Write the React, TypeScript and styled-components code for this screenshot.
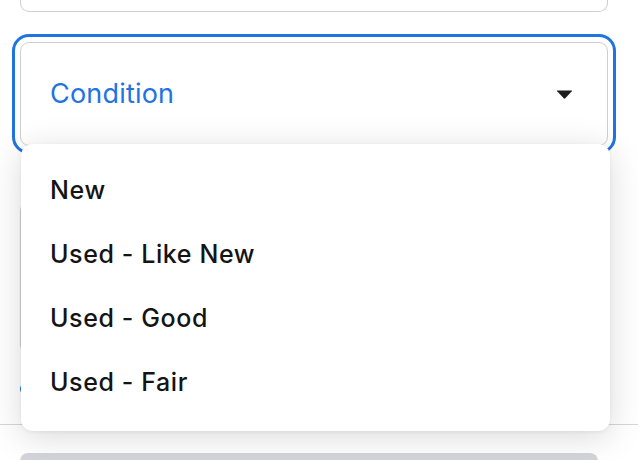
import React from "react";
import styled, { createGlobalStyle } from "styled-components";

const GlobalStyle = createGlobalStyle`
  html, body {
    margin: 0;
    padding: 0;
    background: #ffffff;
  }
  body {
    font-family: Inter, "Noto Sans", "Liberation Sans", sans-serif;
    -webkit-font-smoothing: antialiased;
  }
`;

const Page = styled.div`
  position: relative;
  width: 638px;
  height: 460px;
  overflow: hidden;
  background: #ffffff;
`;

const Form = styled.div`
  display: flex;
  flex-direction: column;
  padding: 0 30px 0 20px;
`;

const CutField = styled.div`
  height: 11px;
  border: 1px solid #cfcfcf;
  border-top: none;
  border-radius: 0 0 9px 9px;
  background: #fff;
`;

const SelectBox = styled.div`
  margin-top: 30px;
  height: 104px;
  box-sizing: border-box;
  display: flex;
  align-items: center;
  justify-content: space-between;
  padding: 0 34px 0 29px;
  border: 1px solid #cfcfcf;
  border-radius: 9px;
  background: #fff;
  outline: 3px solid #1f74e0;
  outline-offset: 5px;
`;

const SelectLabel = styled.span`
  font-size: 27px;
  color: #1f74e0;
  letter-spacing: 0.2px;
  margin-top: -2px;
`;

const TextArea = styled.div`
  margin-top: 56px;
  height: 150px;
  border: 1px solid #cfcfcf;
  border-radius: 9px;
  background: #fff;
`;

const HelperRow = styled.div`
  margin-top: 30px;
  display: flex;
  align-items: center;
  gap: 8px;
  font-size: 16px;
  color: #1f74e0;
`;

const Dot = styled.span`
  width: 8px;
  height: 10px;
  border-radius: 50%;
  background: #1f74e0;
`;

const Divider = styled.div`
  margin-top: 30px;
  height: 1px;
  background: #d6d6d6;
`;

const Footer = styled.div`
  padding: 28px 40px 0 20px;
`;

const SubmitButton = styled.div`
  height: 44px;
  border-radius: 8px;
  background: #d3d5da;
`;

const Menu = styled.ul`
  position: absolute;
  top: 144px;
  left: 21px;
  width: 589px;
  margin: 0;
  padding: 14px 0 17px;
  list-style: none;
  background: #ffffff;
  border-radius: 12px;
  box-shadow: 0 6px 34px rgba(0, 0, 0, 0.15), 0 1px 4px rgba(0, 0, 0, 0.06);
`;

const MenuItem = styled.li`
  height: 64px;
  display: flex;
  align-items: center;
  padding-left: 29px;
  font-size: 25px;
  font-weight: 500;
  letter-spacing: 0.6px;
  color: #141414;
`;

const Caret = () => (
  <svg width="17" height="11" viewBox="0 0 17 11">
    <path d="M1.5 1.5 H15.5 Q16.5 1.5 15.8 2.3 L9.3 9.3 Q8.5 10.1 7.7 9.3 L1.2 2.3 Q0.5 1.5 1.5 1.5 Z" fill="#1c1c1c" />
  </svg>
);

const options = ["New", "Used - Like New", "Used - Good", "Used - Fair"];

export default function App() {
  return (
    <Page>
      <GlobalStyle />
      <Form>
        <CutField />
        <SelectBox>
          <SelectLabel>Condition</SelectLabel>
          <Caret />
        </SelectBox>
        <TextArea />
        <HelperRow>
          <Dot />
        </HelperRow>
      </Form>
      <Divider />
      <Footer>
        <SubmitButton />
      </Footer>
      <Menu>
        {options.map((o) => (
          <MenuItem key={o}>{o}</MenuItem>
        ))}
      </Menu>
    </Page>
  );
}
